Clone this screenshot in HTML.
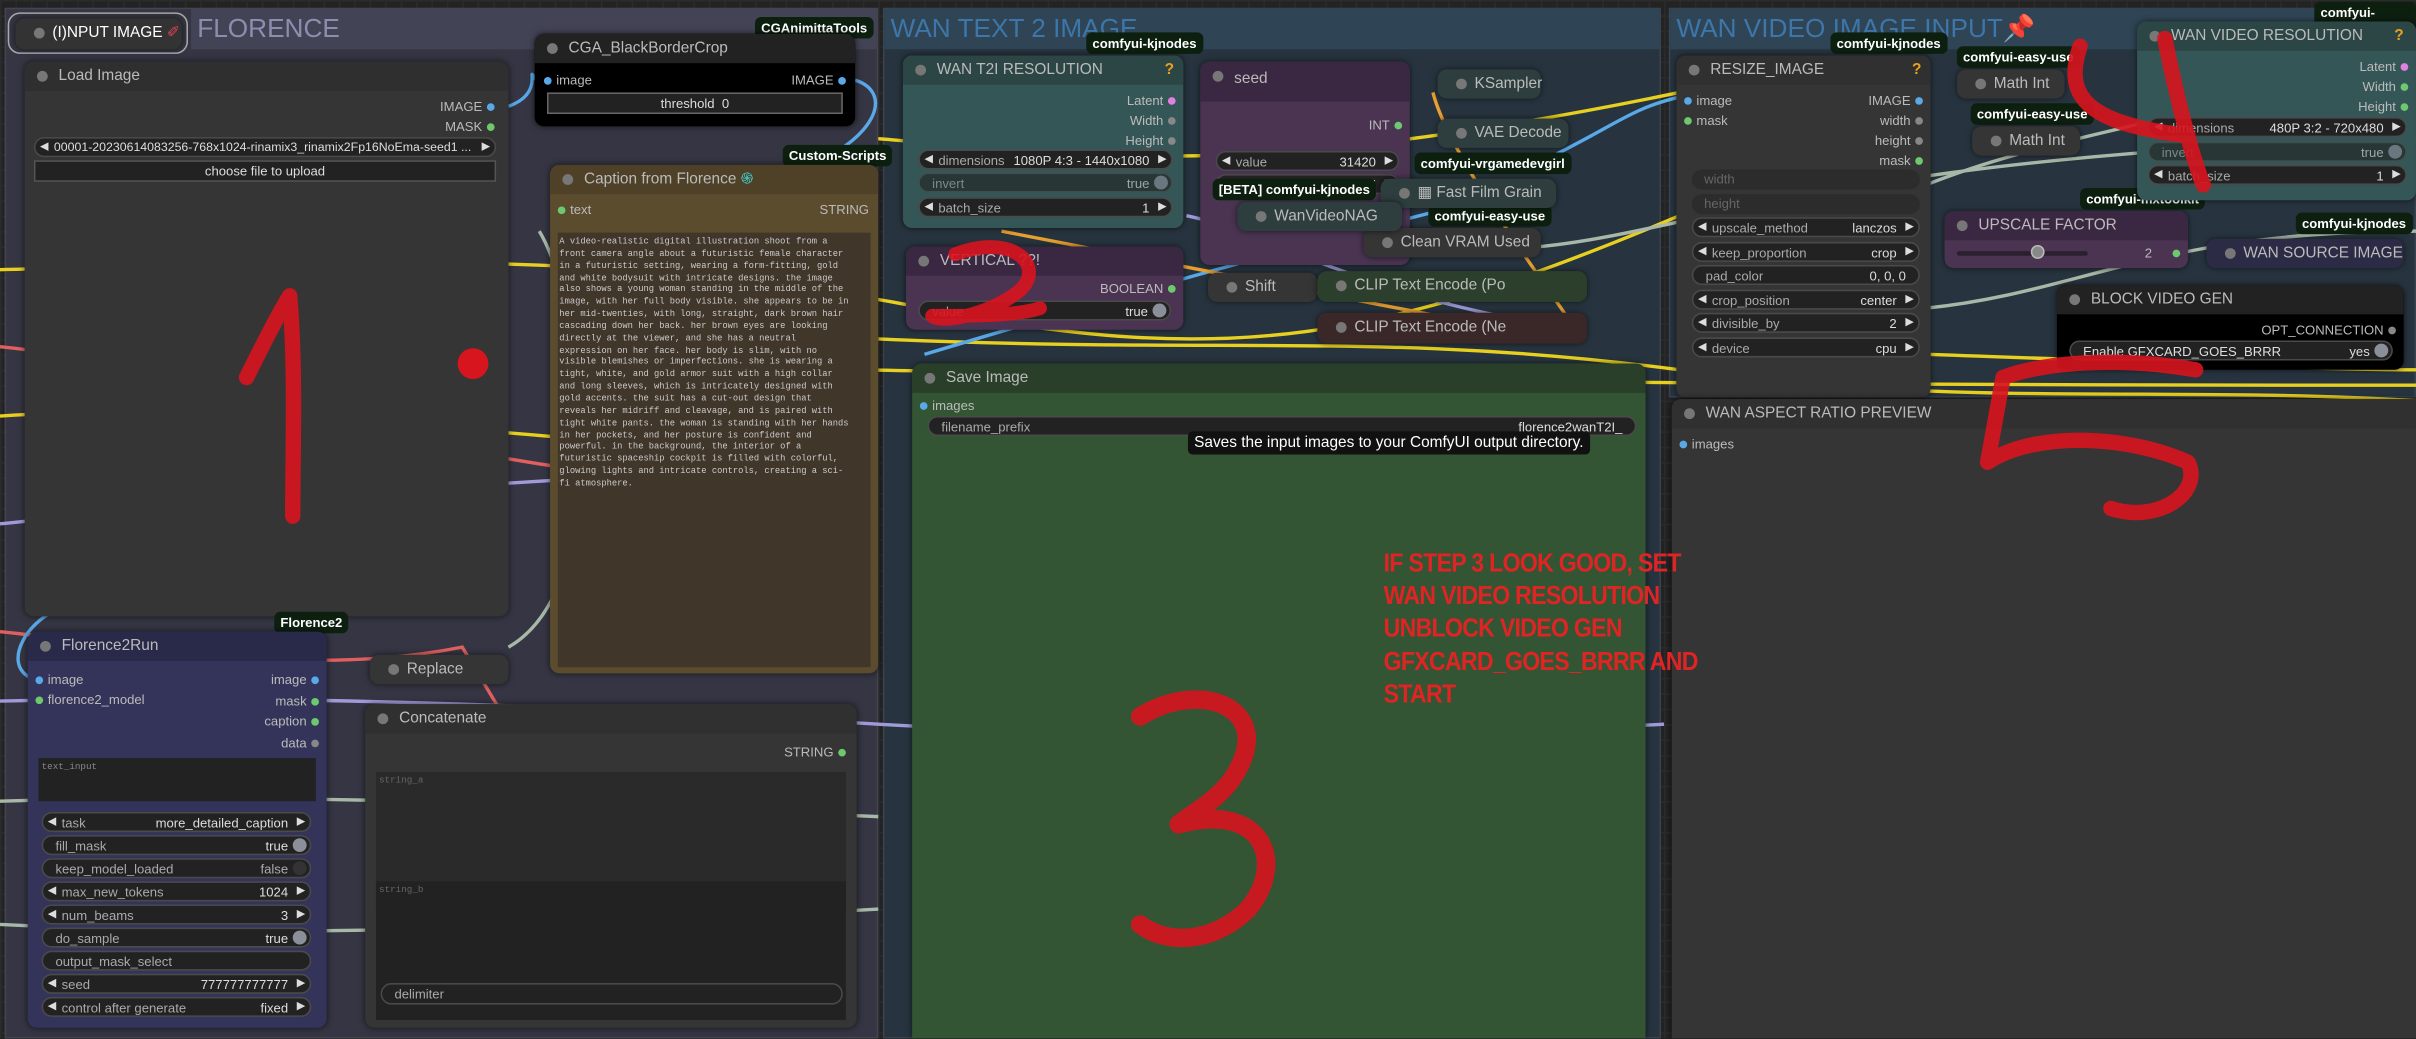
<!DOCTYPE html>
<html><head><meta charset="utf-8"><style>
*{margin:0;padding:0;box-sizing:border-box}
html,body{width:2416px;height:1039px;overflow:hidden;background:#1e1e1e}
#s{position:absolute;left:0;top:0;width:1568px;height:674px;transform:scale(1.5408);transform-origin:0 0;font-family:"Liberation Sans",sans-serif;color:#ccc;font-size:9px;
background-color:#232323;background-image:linear-gradient(#2b2b2b 1px,transparent 1px),linear-gradient(90deg,#2b2b2b 1px,transparent 1px);background-size:10px 10px}
.a{position:absolute}
.g{position:absolute;border:1px solid rgba(255,255,255,.08)}
.gt{position:absolute;left:0;top:0;right:0;height:26px;font-size:17px;line-height:26px;padding-left:4px}
.n{position:absolute;border-radius:6px;box-shadow:0 0 4px rgba(0,0,0,.6);overflow:hidden}
.h{position:absolute;left:0;top:0;right:0;height:19px;line-height:19px;padding-left:22px;font-size:10px;color:#bbb}
.h:before{content:"";position:absolute;left:8px;top:6px;width:7px;height:7px;border-radius:50%;background:#777}
.w{position:absolute;height:13px;line-height:12px;border-radius:7px;background:#222;border:1px solid #4a4a4a;font-size:8.5px;color:#aaa;padding:0 12px;white-space:nowrap;overflow:hidden}
.w b{position:absolute;right:14px;top:0;font-weight:normal;color:#ddd}
.w:before{content:"◀";position:absolute;left:3px;font-size:7px;color:#ddd}
.w:after{content:"▶";position:absolute;right:3px;font-size:7px;color:#ddd}
.w.t:before,.w.t:after{content:""}
.w.t{padding-left:8px}
.w.t i{position:absolute;right:2px;top:1px;width:9px;height:9px;border-radius:50%;background:#8a8f9a}
.o{position:absolute;font-size:8.5px;color:#bbb;text-align:right}
.d{display:inline-block;width:5px;height:5px;border-radius:50%;margin:0 3px;vertical-align:middle}
.tag{position:absolute;background:#0d2010;color:#fff;font-size:8.5px;font-weight:bold;padding:2px 4px;border-radius:4px}
.sn{position:absolute;border-radius:6px;height:19px;line-height:19px;font-size:10px;color:#bbb;padding-left:24px;box-shadow:0 0 4px rgba(0,0,0,.6)}
.sn:before{content:"";position:absolute;left:12px;top:6px;width:7px;height:7px;border-radius:50%;background:#777}
</style></head><body><div id="s">

<!-- groups -->
<div class="g" style="left:3px;top:5px;width:567px;height:669px;background:#353543"><div class="gt" style="background:#434356;color:#8d8db0;left:120px">FLORENCE</div></div>
<div class="g" style="left:573px;top:5px;width:505px;height:669px;background:#27343f"><div class="gt" style="background:#2f4455;color:#3d76a8">WAN TEXT 2 IMAGE</div></div>
<div class="g" style="left:1083px;top:5px;width:485px;height:253px;background:#27343f"><div class="gt" style="background:#2f4455;color:#3d76a8">WAN VIDEO IMAGE INPUT<span style="color:#e0405a">📌</span></div></div>

<!-- wires -->
<svg class="a" style="left:0;top:0" width="1568" height="674" fill="none" stroke-width="2.2">
<path d="M0 175 C200 170 400 160 600 200 S900 220 1090 140" stroke="#e8d020"/>
<path d="M0 270 C150 260 300 280 560 300" stroke="#e8d020"/>
<path d="M570 220 C800 230 900 215 1090 240 S1400 250 1568 260" stroke="#e8d020"/>
<path d="M560 240 C800 245 1000 250 1568 250" stroke="#e8d020"/>
<path d="M570 90 C700 100 800 120 1090 60" stroke="#e8d020"/>
<path d="M0 410 C100 420 200 440 300 420 L330 470" stroke="#e06060"/>
<path d="M0 225 C150 240 250 310 560 320" stroke="#e06060"/>
<path d="M0 340 C100 330 200 320 560 300" stroke="#a09bd8"/>
<path d="M0 455 C200 450 400 460 570 470 S900 480 1080 470" stroke="#a09bd8"/>
<path d="M0 520 C150 515 300 520 570 530" stroke="#a8b8a8"/>
<path d="M0 600 C200 610 400 600 570 590" stroke="#a8b8a8"/>
<path d="M330 420 C400 380 380 200 350 150" stroke="#a8b8a8"/>
<path d="M330 69 C355 60 340 40 348 52" stroke="#59a8e8"/>
<path d="M555 52 C580 60 570 90 520 110" stroke="#59a8e8"/>
<path d="M20 440 C0 430 20 400 40 395" stroke="#59a8e8"/>
<path d="M600 230 C700 200 800 170 1000 120" stroke="#59a8e8"/>
<path d="M1010 100 C1050 80 1060 70 1090 63" stroke="#59a8e8"/>
<path d="M1000 160 C1100 150 1200 100 1568 90" stroke="#a8b8a8"/>
<path d="M1250 120 C1300 100 1350 90 1390 80" stroke="#a8b8a8"/>
<path d="M1250 200 C1350 190 1400 150 1568 150" stroke="#a8b8a8"/>
<path d="M930 60 C940 100 1000 180 1020 210" stroke="#e8a030"/>
<path d="M650 150 C750 170 850 190 1010 220" stroke="#e8a030"/>
<path d="M770 140 C820 150 880 190 1000 210" stroke="#a09bd8"/>
<path d="M1253 230 C1400 235 1500 240 1568 240" stroke="#e8d020"/>
</svg>

<!-- Input image node -->
<div class="a" style="left:5px;top:8px;width:117px;height:27px;border:1.5px solid #aaa;border-radius:8px"></div>
<div class="sn" style="left:10px;top:12px;width:108px;height:20px;background:#333;color:#fff">(I)NPUT IMAGE <span style="color:#e0405a">✐</span></div>

<!-- Load Image -->
<div class="n" style="left:16px;top:40px;width:314px;height:360px;background:#353535"><div class="h" style="background:#2f2f2f">Load Image</div>
<div class="o" style="right:6px;top:24px">IMAGE<span class="d" style="background:#59a8e8"></span></div>
<div class="o" style="right:6px;top:37px">MASK<span class="d" style="background:#6ec86e"></span></div>
<div class="w" style="left:6px;top:49px;width:300px;color:#ddd;font-size:8px">00001-20230614083256-768x1024-rinamix3_rinamix2Fp16NoEma-seed1 ...</div>
<div class="a" style="left:6px;top:64px;width:300px;height:14px;background:#222;border:1px solid #555;text-align:center;font-size:8.5px;line-height:12px;color:#ddd">choose file to upload</div>
</div>

<!-- CGA -->
<div class="tag" style="left:490px;top:11px">CGAnimittaTools</div>
<div class="n" style="left:347px;top:22px;width:208px;height:60px;background:#000"><div class="h" style="background:#222">CGA_BlackBorderCrop</div>
<div class="o" style="left:3px;top:25px;text-align:left"><span class="d" style="background:#59a8e8"></span>image</div>
<div class="o" style="right:3px;top:25px">IMAGE<span class="d" style="background:#59a8e8"></span></div>
<div class="a" style="left:8px;top:38px;width:192px;height:14px;background:#222;border:1px solid #666;text-align:center;color:#ddd;font-size:8.5px;line-height:12px">threshold&nbsp; 0</div>
</div>

<!-- Caption -->
<div class="tag" style="left:508px;top:94px">Custom-Scripts</div>
<div class="n" style="left:357px;top:107px;width:213px;height:330px;background:#5c4c2e"><div class="h" style="background:#4e4128">Caption from Florence <span style="color:#4cc">֍</span></div>
<div class="o" style="left:2px;top:24px;text-align:left"><span class="d" style="background:#6ec86e"></span>text</div>
<div class="o" style="right:6px;top:24px">STRING</div>
<div class="a" style="left:5px;top:44px;width:203px;height:282px;background:#40362a;font-family:'Liberation Mono',monospace;font-size:5.7px;line-height:7.85px;color:#ccc;padding:2px 12px 0 1px">A video-realistic digital illustration shoot from a front camera angle about a futuristic female character in a futuristic setting, wearing a form-fitting, gold and white bodysuit with intricate designs. the image also shows a young woman standing in the middle of the image, with her full body visible. she appears to be in her mid-twenties, with long, straight, dark brown hair cascading down her back. her brown eyes are looking directly at the viewer, and she has a neutral expression on her face. her body is slim, with no visible blemishes or imperfections. she is wearing a tight, white, and gold armor suit with a high collar and long sleeves, which is intricately designed with gold accents. the suit has a cut-out design that reveals her midriff and cleavage, and is paired with tight white pants. the woman is standing with her hands in her pockets, and her posture is confident and powerful. in the background, the interior of a futuristic spaceship cockpit is filled with colorful, glowing lights and intricate controls, creating a sci-fi atmosphere.</div>
</div>

<!-- Florence2Run -->
<div class="tag" style="left:178px;top:397px">Florence2</div>
<div class="n" style="left:18px;top:410px;width:194px;height:257px;background:#34345a"><div class="h" style="background:#29294a">Florence2Run</div>
<div class="o" style="left:2px;top:25px;text-align:left;line-height:13px"><span class="d" style="background:#59a8e8"></span>image<br><span class="d" style="background:#6ec86e"></span>florence2_model</div>
<div class="o" style="right:2px;top:25px;line-height:13.5px">image<span class="d" style="background:#59a8e8"></span><br>mask<span class="d" style="background:#6ec86e"></span><br>caption<span class="d" style="background:#6ec86e"></span><br>data<span class="d" style="background:#888"></span></div>
<div class="a" style="left:7px;top:82px;width:180px;height:28px;background:#222;font-family:'Liberation Mono',monospace;font-size:6px;color:#888;padding:2px">text_input</div>
<div class="w" style="left:9px;top:117px;width:175px">task<b>more_detailed_caption</b></div>
<div class="w t" style="left:9px;top:132px;width:175px">fill_mask<b>true</b><i></i></div>
<div class="w t" style="left:9px;top:147px;width:175px">keep_model_loaded<b style="color:#aaa">false</b><i style="background:#333"></i></div>
<div class="w" style="left:9px;top:162px;width:175px">max_new_tokens<b>1024</b></div>
<div class="w" style="left:9px;top:177px;width:175px">num_beams<b>3</b></div>
<div class="w t" style="left:9px;top:192px;width:175px">do_sample<b>true</b><i></i></div>
<div class="w t" style="left:9px;top:207px;width:175px">output_mask_select</div>
<div class="w" style="left:9px;top:222px;width:175px">seed<b>777777777777</b></div>
<div class="w" style="left:9px;top:237px;width:175px">control after generate<b>fixed</b></div>
</div>

<div class="sn" style="left:240px;top:425px;width:90px;background:#353535">Replace</div>

<!-- Concatenate -->
<div class="n" style="left:237px;top:457px;width:319px;height:210px;background:#353535"><div class="h" style="background:#303030">Concatenate</div>
<div class="o" style="right:4px;top:26px">STRING<span class="d" style="background:#6ec86e"></span></div>
<div class="a" style="left:7px;top:44px;width:305px;height:90px;background:#2a2a2a;font-family:'Liberation Mono',monospace;font-size:6px;color:#666;padding:2px">string_a</div>
<div class="a" style="left:7px;top:115px;width:305px;height:90px;background:#222;font-family:'Liberation Mono',monospace;font-size:6px;color:#666;padding:2px">string_b</div>
<div class="w t" style="left:10px;top:181px;width:300px;height:14px;z-index:2">delimiter</div>
</div>

<!-- WAN T2I -->
<div class="tag" style="left:705px;top:21px">comfyui-kjnodes</div>
<div class="n" style="left:586px;top:36px;width:182px;height:112px;background:#355656"><div class="h" style="background:#2c4545">WAN T2I RESOLUTION<span style="position:absolute;right:6px;color:#e8a020;font-weight:bold">?</span></div>
<div class="o" style="right:2px;top:23px;line-height:13px">Latent<span class="d" style="background:#e080e0"></span><br>Width<span class="d" style="background:#888"></span><br>Height<span class="d" style="background:#888"></span></div>
<div class="w" style="left:10px;top:61px;width:165px">dimensions<b>1080P 4:3 - 1440x1080</b></div>
<div class="w t" style="left:10px;top:76px;width:165px;opacity:.6">invert<b>true</b><i></i></div>
<div class="w" style="left:10px;top:92px;width:165px">batch_size<b>1</b></div>
</div>

<!-- seed -->
<div class="n" style="left:779px;top:40px;width:136px;height:132px;background:#4a3452"><div class="h" style="background:#3a2842;height:26px;line-height:24px">seed</div>
<div class="o" style="right:2px;top:36px">INT<span class="d" style="background:#6ec86e"></span></div>
<div class="w" style="left:10px;top:58px;width:119px">value<b>31420</b></div>
<div class="w" style="left:10px;top:73px;width:119px">control after ge ...<b>fixed</b></div>
</div>

<div class="tag" style="left:787px;top:116px">[BETA] comfyui-kjnodes</div>
<div class="tag" style="left:918px;top:99px">comfyui-vrgamedevgirl</div>
<div class="tag" style="left:927px;top:133px">comfyui-easy-use</div>
<div class="sn" style="left:933px;top:45px;width:67px;background:#2e3e3e">KSampler</div>
<div class="sn" style="left:933px;top:77px;width:85px;background:#2e3e3e">VAE Decode</div>
<div class="sn" style="left:896px;top:116px;width:114px;background:#2e3e3e">▦ Fast Film Grain</div>
<div class="sn" style="left:885px;top:148px;width:115px;background:#353535">Clean VRAM Used</div>
<div class="sn" style="left:803px;top:131px;width:107px;background:#2e3e3e">WanVideoNAG</div>
<div class="sn" style="left:784px;top:177px;width:71px;background:#353535">Shift</div>
<div class="sn" style="left:855px;top:176px;width:175px;height:20px;background:#2c3f2c">CLIP Text Encode (Po</div>
<div class="sn" style="left:855px;top:203px;width:175px;height:20px;background:#3a2828">CLIP Text Encode (Ne</div>

<!-- VERTICAL -->
<div class="n" style="left:588px;top:160px;width:180px;height:54px;background:#4a3452"><div class="h" style="background:#3a2842">VERTICAL ??!</div>
<div class="o" style="right:2px;top:22px">BOOLEAN<span class="d" style="background:#6ec86e"></span></div>
<div class="w t" style="left:8px;top:35px;width:164px">value<b>true</b><i></i></div>
</div>

<!-- Save Image -->
<div class="n" style="left:592px;top:236px;width:476px;height:438px;background:#335533;border-radius:6px 6px 0 0"><div class="h" style="background:#2a3f2a">Save Image</div>
<div class="o" style="left:2px;top:22px;text-align:left"><span class="d" style="background:#59a8e8"></span>images</div>
<div class="w t" style="left:10px;top:34px;width:460px">filename_prefix<b style="right:8px">florence2wanT2I_</b></div>
</div>
<div class="a" style="left:771px;top:280px;padding:2px 4px;background:#111;color:#fff;font-size:10px;border-radius:3px">Saves the input images to your ComfyUI output directory.</div>

<!-- RESIZE -->
<div class="tag" style="left:1188px;top:21px">comfyui-kjnodes</div>
<div class="n" style="left:1088px;top:36px;width:165px;height:222px;background:#353535"><div class="h" style="background:#303030">RESIZE_IMAGE<span style="position:absolute;right:6px;color:#e8a020;font-weight:bold">?</span></div>
<div class="o" style="left:2px;top:23px;text-align:left;line-height:13px"><span class="d" style="background:#59a8e8"></span>image<br><span class="d" style="background:#6ec86e"></span>mask</div>
<div class="o" style="right:2px;top:23px;line-height:13px">IMAGE<span class="d" style="background:#59a8e8"></span><br>width<span class="d" style="background:#888"></span><br>height<span class="d" style="background:#888"></span><br>mask<span class="d" style="background:#6ec86e"></span></div>
<div class="w t" style="left:10px;top:74px;width:148px;background:#2c2c2c;border:none;color:#666">width</div>
<div class="w t" style="left:10px;top:90px;width:148px;background:#2c2c2c;border:none;color:#666">height</div>
<div class="w" style="left:10px;top:105px;width:148px">upscale_method<b>lanczos</b></div>
<div class="w" style="left:10px;top:121px;width:148px">keep_proportion<b>crop</b></div>
<div class="w t" style="left:10px;top:136px;width:148px">pad_color<b style="right:8px">0, 0, 0</b></div>
<div class="w" style="left:10px;top:152px;width:148px">crop_position<b>center</b></div>
<div class="w" style="left:10px;top:167px;width:148px">divisible_by<b>2</b></div>
<div class="w" style="left:10px;top:183px;width:148px">device<b>cpu</b></div>
</div>

<div class="tag" style="left:1270px;top:30px">comfyui-easy-use</div>
<div class="tag" style="left:1279px;top:67px">comfyui-easy-use</div>
<div class="tag" style="left:1350px;top:122px">comfyui-mxtoolkit</div>
<div class="tag" style="left:1490px;top:138px">comfyui-kjnodes</div>
<div class="tag" style="left:1502px;top:1px">comfyui-kjnodes</div>
<div class="sn" style="left:1270px;top:45px;width:70px;background:#353535">Math Int</div>
<div class="sn" style="left:1280px;top:82px;width:70px;background:#353535">Math Int</div>

<!-- WAN VIDEO RES -->
<div class="n" style="left:1387px;top:14px;width:181px;height:116px;background:#355656"><div class="h" style="background:#2c4545">WAN VIDEO RESOLUTION<span style="position:absolute;right:8px;color:#e8a020;font-weight:bold">?</span></div>
<div class="o" style="right:2px;top:23px;line-height:13px">Latent<span class="d" style="background:#e080e0"></span><br>Width<span class="d" style="background:#6ec86e"></span><br>Height<span class="d" style="background:#6ec86e"></span></div>
<div class="w" style="left:7px;top:62px;width:168px">dimensions<b>480P 3:2 - 720x480</b></div>
<div class="w t" style="left:7px;top:78px;width:168px;opacity:.6">invert<b>true</b><i></i></div>
<div class="w" style="left:7px;top:93px;width:168px">batch_size<b>1</b></div>
</div>

<!-- UPSCALE -->
<div class="n" style="left:1262px;top:137px;width:158px;height:37px;background:#4a3452"><div class="h" style="background:#3a2842">UPSCALE FACTOR</div>
<div class="a" style="left:8px;top:26px;width:85px;height:3px;background:#2a2030;border-radius:2px"></div>
<div class="a" style="left:56px;top:22px;width:9px;height:9px;border-radius:50%;border:1.5px solid #bbb;background:#888"></div>
<div class="o" style="left:130px;top:22px">2</div><div class="o" style="left:145px;top:22px"><span class="d" style="background:#6ec86e"></span></div>
</div>
<div class="sn" style="left:1432px;top:155px;width:128px;background:#2b2b45">WAN SOURCE IMAGE</div>

<!-- BLOCK -->
<div class="n" style="left:1335px;top:185px;width:225px;height:55px;background:#000"><div class="h" style="background:#222">BLOCK VIDEO GEN</div>
<div class="o" style="right:2px;top:24px">OPT_CONNECTION<span class="d" style="background:#888"></span></div>
<div class="w t" style="left:8px;top:36px;width:210px;color:#ddd">Enable GFXCARD_GOES_BRRR<b>yes</b><i></i></div>
</div>

<!-- aspect preview -->
<div class="n" style="left:1085px;top:259px;width:483px;height:415px;background:#353535;border-radius:6px 0 0 0"><div class="h" style="background:#303030">WAN ASPECT RATIO PREVIEW</div>
<div class="o" style="left:2px;top:24px;text-align:left"><span class="d" style="background:#59a8e8"></span>images</div></div>

<div class="a" style="left:898px;top:355px;color:#e02424;font-weight:bold;font-size:17px;line-height:21.2px;letter-spacing:-0.5px;transform:scaleX(0.88);transform-origin:0 0;white-space:nowrap;z-index:5">IF STEP 3 LOOK GOOD, SET<br>WAN VIDEO RESOLUTION<br>UNBLOCK VIDEO GEN<br>GFXCARD_GOES_BRRR AND<br>START</div>

<!-- red annotations -->
<svg class="a" style="left:0;top:0;z-index:6" width="1568" height="674" fill="none" stroke="#d8141e" stroke-linecap="round" stroke-linejoin="round" opacity=".9">
<circle cx="307" cy="236" r="10" fill="#e8121c" stroke="none"/>
<path d="M160 245 C170 225 180 205 188 192 C192 240 190 290 190 335" stroke-width="10"/>
<path d="M620 165 C660 150 680 175 660 190 C640 205 610 210 605 205 C630 205 660 205 675 200" stroke-width="9"/>
<path d="M740 465 C780 440 830 460 800 505 C790 520 770 530 765 535 C820 520 835 560 810 590 C790 610 760 615 740 600" stroke-width="12"/>
<path d="M1350 30 C1340 60 1350 80 1420 88 M1405 25 C1412 60 1422 100 1430 120" stroke-width="10"/>
<path d="M1425 240 C1380 232 1330 234 1300 245 L1290 300 C1320 280 1380 282 1420 300 C1430 320 1400 340 1370 330" stroke-width="10"/>
</svg>

</div></body></html>
